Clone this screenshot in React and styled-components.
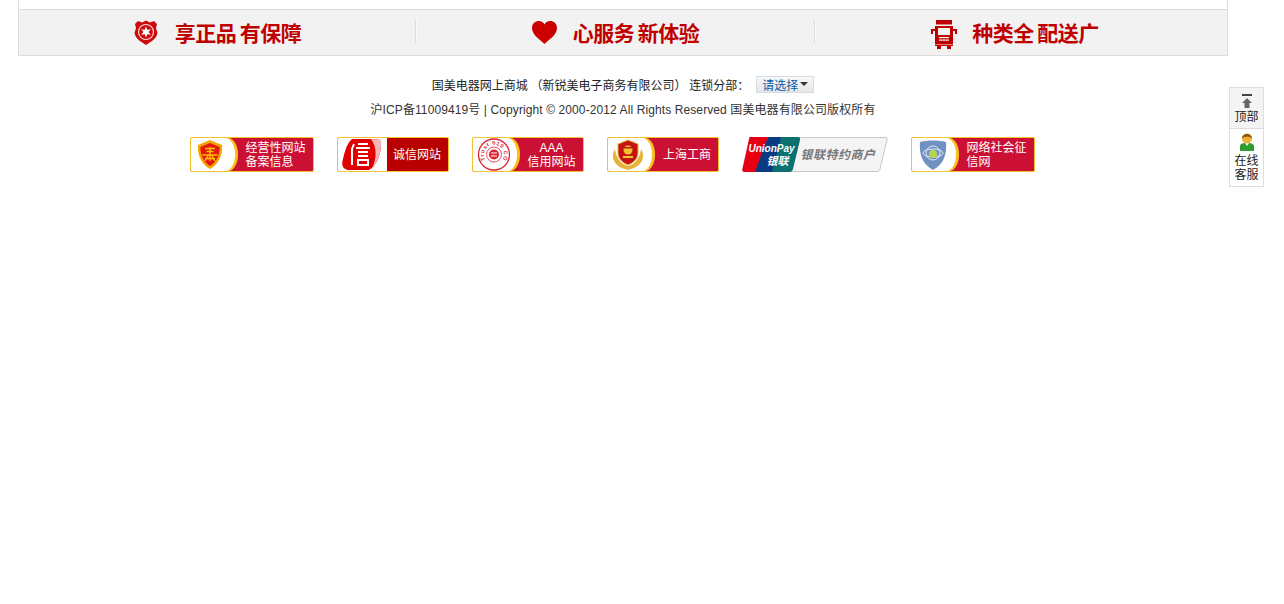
import React from 'react';
import styled, { createGlobalStyle } from 'styled-components';

const GlobalStyle = createGlobalStyle`
  html, body { margin: 0; padding: 0; background: #fff; }
  body {
    font-family: "Liberation Sans", "Noto Sans CJK SC", sans-serif;
    font-size: 12px;
    color: #333;
  }
`

const Page = styled.div`
  width: 1210px;
  margin-left: 18px;
`
const TopStrip = styled.div`
  height: 9px;
  border-left: 1px solid #ddd;
  border-right: 1px solid #ddd;
`
const Promise = styled.div`
  display: flex;
  background: #f2f2f2;
  border: 1px solid #ddd;
  box-sizing: border-box;
  height: 47px;
`
const PromiseCell = styled.div`
  width: ${p => p.$w}px;
  flex: none;
  display: flex;
  align-items: center;
  justify-content: center;
  gap: ${p => p.$gap}px;
  box-sizing: border-box;
  position: relative;
  &:not(:last-child)::after {
    content: '';
    position: absolute;
    right: 0;
    top: 10px;
    height: 23px;
    width: 1px;
    background: #dcdcdc;
    box-shadow: 1px 0 0 #fafafa;
  }
`
const PromiseIcon = styled.div`
  display: flex;
  margin-top: ${p => p.$top || 0}px;
`
const PromiseText = styled.span`
  font-family: "Noto Sans CJK SC", sans-serif;
  font-weight: 700;
  font-size: 21px;
  line-height: 26px;
  letter-spacing: -0.45px;
  color: #c00000;
  word-spacing: -1px;
  margin-bottom: 2px;
`
const Footer = styled.div`
  padding-top: 19px;
  text-align: center;
`
const Line = styled.div`
  display: flex;
  justify-content: center;
  align-items: center;
  height: ${p => p.$h}px;
  color: #333;
  white-space: pre;
  letter-spacing: ${p => p.$spacing || 0}px;
`
const ChainText = styled.span`
  font-family: "Noto Sans CJK SC", sans-serif;
  font-size: 12px;
  color: #222;
  padding-right: 1px;
`
const CitySelect = styled.div`
  width: 58px;
  height: 17px;
  box-sizing: border-box;
  margin-left: 6px;
  margin-top: 1px;
  padding-left: 5px;
  display: flex;
  align-items: center;
  gap: 2px;
  border: 1px solid #d5dde5;
  background: linear-gradient(#f8f8f8, #e6e6e6);
  color: #0a5aa8;
  font-family: "Noto Sans CJK SC", sans-serif;
  font-size: 12px;
`
const Caret = styled.i`
  width: 0;
  height: 0;
  margin-bottom: 2px;
  border-left: 4px solid transparent;
  border-right: 4px solid transparent;
  border-top: 4px solid #333;
`
const Badges = styled.div`
  display: flex;
  justify-content: center;
  gap: 23px;
  margin-top: 14px;
  padding-right: 22px;
`
const Badge = styled.div`
  width: ${p => p.$w}px;
  height: 35px;
  box-sizing: border-box;
  display: flex;
  overflow: hidden;
  border: 1px solid #f2c230;
  border-radius: 2px;
  background: ${p => p.$flat ? '#b80000' : '#cc1033'};
`
const BadgeSeal = styled.div`
  width: ${p => p.$w}px;
  flex: none;
  display: flex;
  align-items: center;
  justify-content: ${p => p.$flat ? 'center' : 'flex-start'};
  padding-left: ${p => p.$flat ? 0 : p.$pad || 4}px;
  box-sizing: border-box;
  background: #fff;
  border-radius: ${p => p.$flat ? '0' : '0 10px 10px 0 / 0 17px 17px 0'};
  box-shadow: ${p => p.$flat ? 'none' : '3px 0 0 #f6c21c'};
`
const BadgeText = styled.div`
  flex: 1;
  color: #fff;
  font-family: "Liberation Sans", "Noto Sans CJK SC", sans-serif;
  font-size: 12px;
  line-height: 14px;
  text-align: ${p => p.$align || 'left'};
  padding-left: ${p => p.$pad || 0}px;
  display: flex;
  flex-direction: column;
  justify-content: center;
  white-space: nowrap;
`
const UnionBadge = styled.div`
  width: 146px;
  height: 35px;
  display: flex;
  position: relative;
`
const UnionText = styled.span`
  position: absolute;
  left: 59px;
  top: 9px;
  font-family: "Noto Sans CJK SC", sans-serif;
  font-weight: 700;
  font-style: italic;
  font-size: 12px;
  letter-spacing: 0.5px;
  line-height: 16px;
  color: #777;
  white-space: nowrap;
`
const UnionLabel = styled.span`
  position: absolute;
  left: ${p => p.$x}px;
  top: ${p => p.$y}px;
  color: #fff;
  font-style: italic;
  font-weight: 700;
  font-size: ${p => p.$size}px;
  line-height: 1;
  font-family: "Liberation Sans", "Noto Sans CJK SC", sans-serif;
  white-space: nowrap;
`
const SidePanel = styled.div`
  position: fixed;
  left: 1229px;
  top: 87px;
  width: 35px;
  box-sizing: border-box;
  border: 1px solid #ddd;
  background: #fff;
`
const SideButton = styled.div`
  display: flex;
  flex-direction: column;
  align-items: center;
  height: ${p => p.$h}px;
  padding-top: ${p => p.$top}px;
  box-sizing: border-box;
  background: ${p => p.$grey ? '#f4f4f4' : '#fff'};
  border-top: ${p => p.$grey ? 'none' : '1px solid #ddd'};
  color: #222;
  font-family: "Liberation Sans", "Noto Sans CJK SC", sans-serif;
  font-size: 12px;
  line-height: 14px;
  text-align: center;
`
const SideLabel = styled.div`
  margin-top: ${p => p.$top}px;
`

const ShieldIcon = () => (
  <svg width="24" height="25" viewBox="0 0 24 25">
    <path d="M4 1 L8 2.500 L12 0.500 L16 2.500 L20 1 L23 4 L22 8 L23.500 13 C22 20 16 22 12 25 C8 22 2 20 0.500 13 L2 8 L1 4 Z" fill="#cc0a0a" />
    <circle cx="12" cy="12" r="7.500" fill="none" stroke="#f8d8d8" strokeWidth="1.200" />
    <path d="M12 6.500 L13.300 9.700 L16.800 9.200 L14.600 12 L16.800 14.800 L13.300 14.300 L12 17.500 L10.700 14.300 L7.200 14.800 L9.400 12 L7.200 9.200 L10.700 9.700 Z" fill="#fff" />
  </svg>
)

const HeartIcon = () => (
  <svg width="25" height="23" viewBox="0 0 25 23">
    <path d="M12.500 23 C8 18.500 0 14 0 7 C0 2.500 3.500 0 6.800 0 C9.500 0 11.500 1.500 12.500 3.500 C13.500 1.500 15.500 0 18.200 0 C21.500 0 25 2.500 25 7 C25 14 17 18.500 12.500 23 Z" fill="#cc0000" />
  </svg>
)

const TruckIcon = () => (
  <svg width="26" height="29" viewBox="0 0 26 29" fill="#c00000">
    <rect x="5" y="0" width="16" height="4.500" />
    <path d="M4 6 H22 V24 H4 Z M7 8 V15 H19 V8 Z" fillRule="evenodd" />
    <path d="M0 9 H4 V11 H2 V14 H0 Z M26 9 H22 V11 H24 V14 H26 Z" />
    <rect x="8" y="17" width="10" height="1.200" fill="#f2f2f2" />
    <rect x="8" y="19.500" width="10" height="1.200" fill="#f2f2f2" />
    <rect x="4" y="24.500" width="18" height="1.500" />
    <rect x="6" y="26" width="4" height="3" />
    <rect x="16" y="26" width="4" height="3" />
  </svg>
)

const TradeSeal = () => (
  <svg width="26" height="31" viewBox="0 0 26 31">
    <path d="M13 1 L25 6 C26 16 21 26 13 30 C5 26 0 16 1 6 Z" fill="#f5a300" />
    <path d="M13 4 L22.500 8 C23 16 19 23.500 13 27 C7 23.500 3 16 3.500 8 Z" fill="#e4170f" />
    <path d="M8 9.500 H18 M9.500 12.500 H16.500 M5.500 16 H20.500 M13 8 V22 M8 22 L11 17 M18 22 L15 17 M8 19.500 H18" stroke="#ffc400" strokeWidth="1.300" fill="none" />
  </svg>
)

const CreditSeal = () => (
  <svg width="42" height="33" viewBox="0 0 42 33">
    <path d="M11 1 H32 L40 2 C41 14 36 28 28 32 H7 C2 31 0 27 2 21 C4 13 6 5 11 1 Z" fill="#e00000" />
    <path d="M30 1 L40 2 C41 12 37 24 31 31 C36 20 36 9 30 1 Z" fill="#f2b8b8" />
    <path d="M13 6 L11 11 V27 M17 6 H27 M15 10 H29 M17 14 H27 M17 18 H27 M17 22 H27 V27 H17 Z" stroke="#fff" strokeWidth="2" fill="none" />
  </svg>
)

const TrustSeal = () => (
  <svg width="34" height="33" viewBox="0 0 34 33">
    <circle cx="17" cy="16.500" r="15.500" fill="#fff" stroke="#dd2233" strokeWidth="1.300" />
    <circle cx="17" cy="16.500" r="7.500" fill="none" stroke="#dd2233" strokeWidth="0.800" />
    <path id="trustRing" d="M8.500 22 A10 10 0 1 1 25.500 22" fill="none" />
    <text fontFamily="Liberation Sans" fontSize="5.500" fontWeight="700" fill="#dd2233" letterSpacing="0.700">
      <textPath href="#trustRing">Trust 010 CO</textPath>
    </text>
    <circle cx="17" cy="16.500" r="5" fill="#dd2233" />
    <rect x="14" y="14.500" width="6" height="1" fill="#fff" />
    <rect x="14" y="17.500" width="6" height="1" fill="#fff" />
  </svg>
)

const PoliceSeal = () => (
  <svg width="36" height="32" viewBox="0 0 36 32">
    <path d="M5 10 C0 18 4 28 18 31 C32 28 36 18 31 10 C30 18 26 25 18 27 C10 25 6 18 5 10 Z" fill="#e8b23a" />
    <path d="M18 1 L28 5 V14 C28 20 23 24 18 26 C13 24 8 20 8 14 V5 Z" fill="#c41414" stroke="#e8b23a" strokeWidth="1" />
    <circle cx="18" cy="11" r="4.500" fill="#f2c230" />
    <rect x="14" y="8" width="8" height="1.500" fill="#c41414" />
    <rect x="13" y="17" width="10" height="2" fill="#f2c230" />
  </svg>
)

const ShieldSeal = () => (
  <svg width="30" height="32" viewBox="0 0 30 32">
    <path d="M2 3 C10 1 20 1 28 3 C29 15 26 25 15 31 C4 25 1 15 2 3 Z" fill="#6f92c2" />
    <circle cx="15" cy="14" r="7" fill="none" stroke="#dfe9f3" strokeWidth="1" />
    <ellipse cx="15" cy="14" rx="10" ry="4" fill="none" stroke="#dfe9f3" strokeWidth="1" />
    <circle cx="15" cy="15" r="4" fill="#b7d44a" />
  </svg>
)

const UnionFlag = () => (
  <svg width="146" height="35" viewBox="0 0 146 35" style={{ position: 'absolute', left: 0, top: 0 }}>
    <path d="M8 0.500 H144 C145 0.500 145.500 1 145.300 2 L138 32 C137.500 34 136.500 34.500 135 34.500 H3 C1 34.500 0 33.500 0.500 32 Z" fill="#f4f4f4" stroke="#c9c9c9" />
    <path d="M8 0 H26 L17 35 H3 C1 35 0 34 0.500 32 L7 2 C7.300 0.700 7.500 0 8 0 Z" fill="#e60012" />
    <path d="M26 0 H42 L33 35 H13 Z" fill="#0a3a82" />
    <path d="M39 0 H56 C58 0 58.500 1 58 3 L51 32 C50.500 34 49.500 35 47 35 H30 Z" fill="#0a7070" />
  </svg>
)

const TopIcon = () => (
  <svg width="12" height="14" viewBox="0 0 12 14">
    <rect x="1" y="0" width="10" height="2" fill="#444" />
    <path d="M6 4 L11 9 H8.500 V14 H3.500 V9 H1 Z" fill="#666" />
  </svg>
)

const ServiceIcon = () => (
  <svg width="14" height="18" viewBox="0 0 14 18">
    <path d="M0 18 V13 C0 11 3 10 5 10 L7 13 L9 10 C11 10 14 11 14 13 V18 Z" fill="#2f9e2f" />
    <circle cx="7" cy="5.500" r="5" fill="#f0b030" />
    <path d="M2 5.500 C2 -0.500 12 -0.500 12 5.500 C10 3 4 3 2 5.500 Z" fill="#8a5a10" />
  </svg>
)

function App() {
  return (
    <>
      <GlobalStyle />
      <Page>
        <TopStrip />
        <Promise>
          <PromiseCell $w={397} $gap={17}><PromiseIcon><ShieldIcon /></PromiseIcon><PromiseText>享正品 有保障</PromiseText></PromiseCell>
          <PromiseCell $w={399} $gap={16}><PromiseIcon><HeartIcon /></PromiseIcon><PromiseText>心服务 新体验</PromiseText></PromiseCell>
          <PromiseCell $w={400} $gap={15}><PromiseIcon $top={3}><TruckIcon /></PromiseIcon><PromiseText>种类全 配送广</PromiseText></PromiseCell>
        </Promise>
        <Footer>
          <Line $h={18}>
            <ChainText>国美电器网上商城 （新锐美电子商务有限公司） 连锁分部：</ChainText>
            <CitySelect>请选择<Caret /></CitySelect>
          </Line>
          <Line $h={30} $spacing={0.1}>沪ICP备11009419号 | Copyright © 2000-2012 All Rights Reserved 国美电器有限公司版权所有</Line>
          <Badges>
            <Badge $w={124}>
              <BadgeSeal $w={44} $pad={6}><TradeSeal /></BadgeSeal>
              <BadgeText $pad={11}><span>经营性网站</span><span>备案信息</span></BadgeText>
            </Badge>
            <Badge $w={112} $flat>
              <BadgeSeal $w={49} $flat><CreditSeal /></BadgeSeal>
              <BadgeText $align="center">诚信网站</BadgeText>
            </Badge>
            <Badge $w={112}>
              <BadgeSeal $w={44} $pad={4}><TrustSeal /></BadgeSeal>
              <BadgeText $align="center" $pad={4}><span>AAA</span><span>信用网站</span></BadgeText>
            </Badge>
            <Badge $w={112}>
              <BadgeSeal $w={44} $pad={2}><PoliceSeal /></BadgeSeal>
              <BadgeText $align="center" $pad={5}>上海工商</BadgeText>
            </Badge>
            <UnionBadge>
              <UnionFlag />
              <UnionLabel $x={7} $y={7} $size={10}>UnionPay</UnionLabel>
              <UnionLabel $x={25} $y={19} $size={11}>银联</UnionLabel>
              <UnionText>银联特约商户</UnionText>
            </UnionBadge>
            <Badge $w={124}>
              <BadgeSeal $w={44} $pad={6}><ShieldSeal /></BadgeSeal>
              <BadgeText $pad={11}><span>网络社会征</span><span>信网</span></BadgeText>
            </Badge>
          </Badges>
        </Footer>
      </Page>
      <SidePanel>
        <SideButton $grey $h={40} $top={6}><TopIcon /><SideLabel $top={2}>顶部</SideLabel></SideButton>
        <SideButton $h={58} $top={4}><ServiceIcon /><SideLabel $top={3}>在线<br />客服</SideLabel></SideButton>
      </SidePanel>
    </>
  );
}

export default App;
